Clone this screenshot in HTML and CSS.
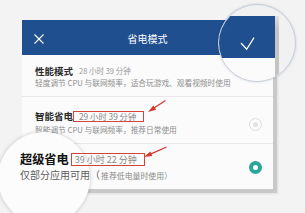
FILE: index.html
```html
<!DOCTYPE html>
<html lang="zh">
<head>
<meta charset="utf-8">
<title>省电模式</title>
<link rel="stylesheet" href="styles.css">
</head>
<body>
<div class="page">
  <div class="card">
    <div class="header">
      <svg class="close" width="10" height="10" viewBox="0 0 10 10"><path d="M0.5 0.5L9.5 9.5M9.5 0.5L0.5 9.5" stroke="#fff" stroke-width="1.1" fill="none"/></svg>
      <div class="title">省电模式</div>
      <div class="spacer"></div>
    </div>
    <div class="row row-1">
      <div class="text">
        <div class="name">性能模式<span class="time">28 小时 39 分钟</span></div>
        <div class="desc">轻度调节 CPU 与联网频率，适合玩游戏、观看视频时使用</div>
      </div>
    </div>
    <div class="row row-2">
      <div class="text">
        <div class="name">智能省电<span class="box">29 小时 39 分钟</span></div>
        <div class="desc">智能调节 CPU 与联网频率，推荐日常使用</div>
      </div>
      <div class="radio"><span class="dot"></span></div>
    </div>
    <div class="row row-3">
      <div class="text">
        <div class="name">超级省电<span class="box">39 小时 22 分钟</span></div>
        <div class="desc"><span class="big">仅部分应用可用（</span>推荐低电量时使用）</div>
      </div>
      <div class="radio on"><span class="dot"></span></div>
    </div>
  </div>
</div>
<div class="lens-bottom"></div>
<div class="lens lens-top">
  <div class="lt-gap"></div>
  <div class="lt-blue">
    <svg width="56" height="42" viewBox="0 0 56 42"><polyline points="22,27 27.7,33.3 35,21.7" stroke="#fff" stroke-width="1.3" fill="none"/></svg>
  </div>
  <div class="lt-strip"></div>
  <div class="lt-card"></div>
</div>
<svg class="arrows" width="305" height="213" viewBox="0 0 305 213">
  <line x1="154" y1="108" x2="165.5" y2="100.5" stroke="#d8362d" stroke-width="1.3"/>
  <polygon points="148,112 153.4,105.6 156.1,109.8" fill="#d8362d"/>
  <line x1="151" y1="153.8" x2="166.5" y2="147" stroke="#d8362d" stroke-width="1.3"/>
  <polygon points="144,157 150.3,151.4 152.3,156" fill="#d8362d"/>
</svg>
</body>
</html>
```
FILE: styles.css
```css
html, body {
  margin: 0;
  padding: 0;
}
body {
  width: 305px;
  height: 213px;
  overflow: hidden;
  background: #f3f3f3;
  font-family: "Noto Sans CJK SC", "Noto Sans", sans-serif;
  position: relative;
}
.page {
  padding: 20px 0 0 22px;
}
.card {
  width: 251px;
  height: 169px;
  background: #fbfbfb;
  box-shadow: 4px 4px 0 #c9c9c9, 5px 5px 2px rgba(0,0,0,0.08);
  display: flex;
  flex-direction: column;
}
.header {
  height: 36px;
  background: #1f4f8f;
  display: flex;
  align-items: center;
  padding: 0 12px;
}
.close {
  width: 10px;
  height: 10px;
  margin-top: 2px;
}
.spacer {
  width: 10px;
}
.title {
  flex: 1;
  text-align: center;
  color: #fff;
  font-size: 10px;
  line-height: 12px;
  margin-top: 2px;
}
.row {
  display: flex;
  align-items: center;
  justify-content: space-between;
  padding: 0 11px 0 13px;
}
.row-1 {
  padding-top: 10px;
  padding-bottom: 8px;
  border-bottom: 1px solid #e8e8e8;
  align-items: flex-start;
}
.row-2 {
  padding-top: 13px;
  padding-bottom: 8px;
  border-bottom: 1px solid #e8e8e8;
}
.row-3 {
  padding-top: 8px;
  padding-bottom: 7px;
  padding-left: 0;
  position: relative;
  z-index: 2;
}
.name {
  font-size: 9.5px;
  line-height: 12px;
  font-weight: 700;
  color: #2a2a2a;
  white-space: nowrap;
  display: flex;
  align-items: center;
}
.desc {
  font-size: 7.7px;
  line-height: 11px;
  color: #8e8e8e;
  white-space: nowrap;
}
.time {
  font-size: 7.5px;
  font-weight: 400;
  color: #9a9a9a;
  margin-left: 6px;
}
.row-2 .desc {
  margin-top: 2px;
}
.box {
  font-weight: 400;
  color: #8a8a8a;
  border: 1px solid #d4443c;
  box-sizing: border-box;
  display: inline-flex;
  align-items: center;
}
.row-2 .box {
  font-size: 8.3px;
  height: 11px;
  width: 71px;
  padding-left: 5px;
  margin-left: 0;
}
.row-3 .text {
  margin-left: -2px;
}
.row-3 .name {
  font-size: 12.2px;
  line-height: 15px;
  color: #111;
}
.row-3 .box {
  font-size: 9px;
  height: 13px;
  width: 74px;
  padding-left: 3px;
  margin-left: 2px;
}
.row-3 .desc {
  margin-top: 2px;
  line-height: 12px;
  font-size: 7.9px;
  color: #8a8a8a;
  display: flex;
  align-items: baseline;
}
.big {
  font-size: 10px;
  color: #5e5e5e;
  margin-right: 1px;
}
.radio {
  width: 13px;
  height: 13px;
  border-radius: 50%;
  box-sizing: border-box;
  border: 1.5px solid #dcdcdc;
  display: flex;
  align-items: center;
  justify-content: center;
}
.row-2 .radio {
  margin-top: 4px;
}
.radio .dot {
  width: 5px;
  height: 5px;
  border-radius: 50%;
  background: #e2e2e2;
}
.radio.on {
  border: none;
  background: #2aa79b;
}
.radio.on .dot {
  background: #fff;
}
.lens {
  position: absolute;
  border-radius: 50%;
  overflow: hidden;
}
.lens-bottom {
  position: absolute;
  left: 0;
  top: 128px;
  width: 96px;
  height: 85px;
  overflow: hidden;
  z-index: 1;
}
.lens-bottom::before {
  content: "";
  position: absolute;
  left: -2px;
  top: 4px;
  width: 92px;
  height: 92px;
  border-radius: 50%;
  background: #fcfcfc;
  box-shadow: 0 0 4px rgba(0,0,0,0.2);
}
.lens-top {
  left: 218px;
  top: 4px;
  width: 78px;
  height: 78px;
  box-sizing: border-box;
  border: 1px solid #c5d0de;
  background: #f1f1f1;
  box-shadow: 0 0 3px rgba(0,0,0,0.15);
  z-index: 3;
  display: grid;
  grid-template-columns: 56px 4px 1fr;
  grid-template-rows: 11px 42px 1fr;
}
.lt-gap {
  grid-column: 1 / 4;
  grid-row: 1;
}
.lt-blue {
  grid-column: 1;
  grid-row: 2;
  background: #1f4f8f;
}
.lt-blue svg {
  display: block;
}
.lt-strip {
  grid-column: 2;
  grid-row: 2 / 4;
  background: linear-gradient(#e0e0e0, #c4c4c4 20%);
}
.lt-card {
  grid-column: 1;
  grid-row: 3;
  background: #fbfbfb;
}
.arrows {
  position: absolute;
  left: 0;
  top: 0;
  z-index: 4;
}
```
